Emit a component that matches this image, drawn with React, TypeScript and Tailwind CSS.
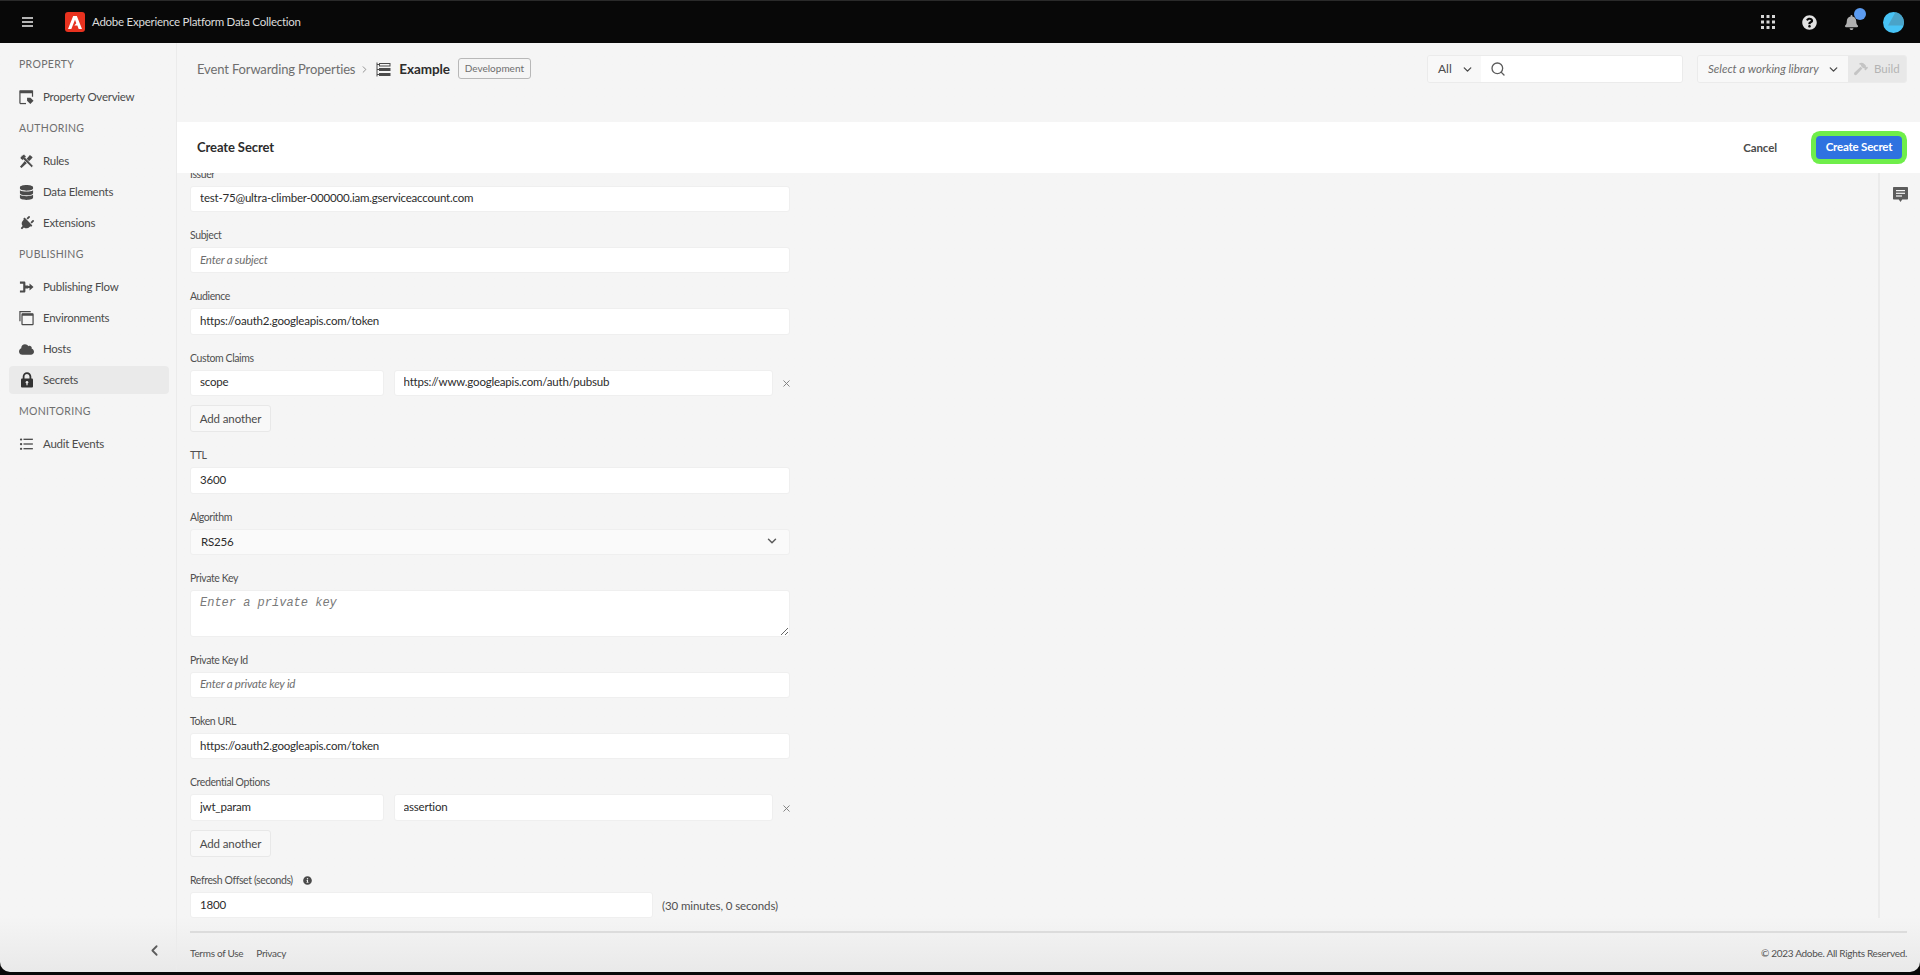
import { ChevronDown, ChevronLeft, ChevronRight, Search, X } from "lucide-react"
import { FaBell, FaCloud, FaDatabase, FaHammer, FaInfoCircle, FaPlug, FaQuestionCircle } from "react-icons/fa"
import type { ReactNode } from "react"

const FONT = "font-['Lato','Noto_Sans',sans-serif]"

function OverviewIcon() {
  return (
    <svg width="16" height="16" viewBox="0 0 16 16" fill="none">
      <path d="M1 15V1.6h13.4v6" stroke="#4b4b4b" strokeWidth="1.3" />
      <path d="M1 15h6.5" stroke="#4b4b4b" strokeWidth="1.3" />
      <rect x="1" y="1" width="13.5" height="3" fill="#4b4b4b" />
      <path d="M8.6 8.8h3.6l3.3 3.3-3.4 3.4-3.5-3.4z" fill="#4b4b4b" />
    </svg>
  )
}

function RulesIcon() {
  return (
    <svg width="16" height="16" viewBox="0 0 16 16" fill="#4b4b4b">
      <path d="M1 14.200 9.800 3.800 11.600 1.500l3 2.600-2 2.200-9.900 9.200z" />
      <path d="M2.800 2.400 5.300.8l2.300 2.300-1 1.100 8.600 9-1.700 1.700-8.900-8.600-1.100 1L1 4.800z" stroke="#f5f5f5" strokeWidth=".7" />
    </svg>
  )
}

function FlowIcon() {
  return (
    <svg width="16" height="16" viewBox="0 0 16 16" fill="#4b4b4b">
      <path d="M1 2.200h4.500c.8 0 1.300.5 1.300 1.300v2.900h3v3.200h-3v3c0 .8-.5 1.300-1.300 1.300H1v-2.200h3.500V4.400H1z" />
      <path d="M9 6.900h2.200V4.200L15.500 8l-4.300 3.800V9.100H9z" />
    </svg>
  )
}

function EnvIcon() {
  return (
    <svg width="16" height="16" viewBox="0 0 16 16" fill="none" stroke="#4b4b4b">
      <path d="M1 11.500V1.200h11.500" strokeWidth="1.3" />
      <rect x="3.200" y="3.600" width="11.800" height="11.400" rx=".6" strokeWidth="1.3" />
      <rect x="3.200" y="3.400" width="11.800" height="2.200" fill="#4b4b4b" stroke="none" />
    </svg>
  )
}

function LockIcon() {
  return (
    <svg width="14" height="16" viewBox="0 0 14 16" fill="#333">
      <path d="M3.600 7V4.500a3.400 3.400 0 0 1 6.800 0V7" fill="none" stroke="#333" strokeWidth="1.800" />
      <rect x="1" y="6.500" width="12" height="9" rx="1" />
      <circle cx="7" cy="10.300" r="1.300" fill="#eaeaea" />
      <rect x="6.400" y="10.500" width="1.200" height="2.800" fill="#eaeaea" />
    </svg>
  )
}

function ListIcon() {
  return (
    <svg width="16" height="16" viewBox="0 0 16 16" fill="#4b4b4b">
      <rect x="1" y="2" width="2.400" height="2.200" rx="1" />
      <rect x="1" y="7" width="2.400" height="2.200" rx="1" />
      <rect x="1" y="12" width="2.400" height="2.200" rx="1" />
      <rect x="4.800" y="2.300" width="10" height="1.400" />
      <rect x="4.800" y="7.300" width="10" height="1.400" />
      <rect x="4.800" y="12.300" width="10" height="1.400" />
    </svg>
  )
}

function ServerIcon() {
  return (
    <svg width="15" height="15" viewBox="0 0 15 15" fill="#4b4b4b">
      <path d="M1 .5v14" stroke="#4b4b4b" strokeWidth="1" />
      <rect x="3.500" y="1.500" width="10.500" height="2.500" fill="none" stroke="#4b4b4b" />
      <rect x="3" y="6" width="11.500" height="3" />
      <rect x="3" y="11" width="11.500" height="3" />
      <rect x="1" y="2" width="2" height="1" />
      <rect x="1" y="7" width="2" height="1" />
      <rect x="1" y="12" width="2" height="1" />
    </svg>
  )
}

function AppsIcon() {
  return (
    <svg width="14" height="14" viewBox="0 0 14 14" fill="#d6d6d6">
      {[0, 5.500, 11].map((y) =>
        [0, 5.500, 11].map((x) => <rect key={`${x}-${y}`} x={x} y={y} width="3" height="3" />)
      )}
    </svg>
  )
}

function AdobeLogo() {
  return (
    <div className="flex h-5 w-5 items-center justify-center rounded-[3px] bg-[#e8321f]">
      <svg width="14" height="13" viewBox="0 0 13 12" fill="#fff">
        <path d="M4.800 0H8.200L13 12H9.900L8.700 8.700H5.900L7.700 6.700 6.500 3.400 3.100 12H0z" />
      </svg>
    </div>
  )
}

function CommentIcon() {
  return (
    <svg width="15" height="16" viewBox="0 0 15 16" fill="#5c5c5c">
      <path d="M1 0h13c.6 0 1 .4 1 1v10.500c0 .6-.4 1-1 1H9.200L7.500 15l-1.700-2.500H1c-.6 0-1-.4-1-1V1c0-.6.4-1 1-1z" />
      <rect x="3" y="3" width="9" height="1.200" fill="#f5f5f5" />
      <rect x="3" y="5.700" width="9" height="1.200" fill="#f5f5f5" />
      <rect x="3" y="8.400" width="6" height="1.200" fill="#f5f5f5" />
    </svg>
  )
}

function Avatar() {
  return (
    <svg width="21" height="21" viewBox="0 0 21 21">
      <circle cx="10.500" cy="10.500" r="10.500" fill="#47c3f5" />
      <path d="M12.500 .2 A10.500 10.500 0 0 1 21 10.500 L20.500 13.500 H5z" fill="#4aa3c8" />
    </svg>
  )
}

function SectionLabel({ children }: { children: ReactNode }) {
  return (
    <div className="mb-[2px] flex h-[31px] items-center pl-[19px] pt-[2px] text-[10.500px] tracking-[0.03em] text-[#6e6e6e]">
      {children}
    </div>
  )
}

function NavItem({ icon, label, active }: { icon: ReactNode; label: string; active?: boolean }) {
  return (
    <div
      className={`my-[1.500px] ml-[9px] mr-[7px] flex h-[28px] items-center gap-[9px] rounded-[4px] pl-[10px] text-[11.500px] tracking-[-0.25px] text-[#4b4b4b] ${active ? "bg-[#eaeaea]" : ""}`}
    >
      <span className="flex w-[15px] shrink-0 items-center justify-center text-[#4b4b4b]">{icon}</span>
      {label}
    </div>
  )
}

function Sidebar() {
  return (
    <aside className="flex w-[177px] shrink-0 flex-col border-r border-[#ebebeb] pt-[5.500px]">
      <SectionLabel>PROPERTY</SectionLabel>
      <NavItem icon={<OverviewIcon />} label="Property Overview" />
      <SectionLabel>AUTHORING</SectionLabel>
      <NavItem icon={<RulesIcon />} label="Rules" />
      <NavItem icon={<FaDatabase size={15} />} label="Data Elements" />
      <NavItem icon={<FaPlug size={15} className="rotate-45" />} label="Extensions" />
      <SectionLabel>PUBLISHING</SectionLabel>
      <NavItem icon={<FlowIcon />} label="Publishing Flow" />
      <NavItem icon={<EnvIcon />} label="Environments" />
      <NavItem icon={<FaCloud size={15} />} label="Hosts" />
      <NavItem icon={<LockIcon />} label="Secrets" active />
      <SectionLabel>MONITORING</SectionLabel>
      <NavItem icon={<ListIcon />} label="Audit Events" />
      <div className="mt-auto flex h-[30px] justify-end pr-[13px]">
        <ChevronLeft size={17} strokeWidth={2.5} className="text-[#5c5c5c]" />
      </div>
    </aside>
  )
}

function TextInput({ value, placeholder, className = "" }: { value?: string; placeholder?: string; className?: string }) {
  return (
    <input
      readOnly
      value={value ?? ""}
      placeholder={placeholder}
      className={`block h-[26.250px] shrink-0 rounded-[3px] border border-[#efefef] bg-white pb-[2px] pl-[9px] text-[11.500px] tracking-[-0.2px] text-[#2c2c2c] outline-none placeholder:text-[#6e6e6e] placeholder:italic ${FONT} ${className}`}
    />
  )
}

function Field({ label, children }: { label: ReactNode; children: ReactNode }) {
  return (
    <div className="mb-[16px]">
      <div className="flex h-[19px] items-start text-[10.500px] leading-[14px] tracking-[-0.4px] text-[#505050]">{label}</div>
      {children}
    </div>
  )
}

function AddAnother() {
  return (
    <button className="mt-[9px] flex h-[27.500px] w-[81px] items-center justify-center rounded-[3px] border border-[#e8e8e8] bg-[#f8f8f8] text-[11.500px] tracking-[-0.1px] text-[#4b4b4b]">
      Add another
    </button>
  )
}

function PairRow({ name, value }: { name: string; value: string }) {
  return (
    <div className="flex items-center">
      <TextInput value={name} className="w-[194px]" />
      <TextInput value={value} className="ml-[9.500px] w-[379px]" />
      <X size={11} strokeWidth={2} className="ml-[8.500px] mt-[2px] shrink-0 text-[#7a7a7a]" />
    </div>
  )
}

function SecretForm() {
  return (
    <div className="-mt-[6.250px] flex w-[600px] shrink-0 flex-col">
      <Field label="Issuer">
        <TextInput value="test-75@ultra-climber-000000.iam.gserviceaccount.com" className="w-full" />
      </Field>
      <Field label="Subject">
        <TextInput placeholder="Enter a subject" className="w-full" />
      </Field>
      <Field label="Audience">
        <TextInput value="https://oauth2.googleapis.com/token" className="w-full" />
      </Field>
      <Field label="Custom Claims">
        <PairRow name="scope" value="https://www.googleapis.com/auth/pubsub" />
        <AddAnother />
      </Field>
      <Field label="TTL">
        <TextInput value="3600" className="w-full" />
      </Field>
      <Field label="Algorithm">
        <div className="flex h-[26.250px] items-center justify-between rounded-[3px] border border-[#efefef] bg-[#fafafa] pb-[1px] pl-[10px] pr-[10px] text-[11.500px] tracking-[-0.2px] text-[#2c2c2c]">
          RS256
          <ChevronDown size={14} strokeWidth={2.500} className="text-[#5c5c5c]" />
        </div>
      </Field>
      <Field label="Private Key">
        <textarea
          readOnly
          placeholder="Enter a private key"
          className="block h-[47px] w-full resize-y rounded-[3px] border border-[#efefef] bg-white px-[9px] py-[3px] font-['Liberation_Mono',monospace] text-[12px] italic outline-none placeholder:text-[#7a7a7a]"
        />
      </Field>
      <Field label="Private Key Id">
        <TextInput placeholder="Enter a private key id" className="w-full" />
      </Field>
      <Field label="Token URL">
        <TextInput value="https://oauth2.googleapis.com/token" className="w-full" />
      </Field>
      <Field label="Credential Options">
        <PairRow name="jwt_param" value="assertion" />
        <AddAnother />
      </Field>
      <Field
        label={
          <span className="flex items-center gap-[10px]">
            Refresh Offset (seconds)
            <FaInfoCircle size={9} className="text-[#4b4b4b]" />
          </span>
        }
      >
        <div className="flex items-center">
          <TextInput value="1800" className="w-[463px]" />
          <span className="ml-[9px] text-[11.500px] tracking-[-0.1px] text-[#505050]">(30 minutes, 0 seconds)</span>
        </div>
      </Field>
    </div>
  )
}

export default function App() {
  return (
    <div className={`flex h-screen w-full flex-col overflow-hidden bg-[#080808] ${FONT}`}>
      <header className="flex h-[43px] shrink-0 items-center border-t border-[#2a2a2a] text-white">
        <div className="ml-[22px] flex w-[11px] flex-col gap-[2.500px]">
          <span className="h-[1.500px] bg-[#b4b4b4]" />
          <span className="h-[1.500px] bg-[#b4b4b4]" />
          <span className="h-[1.500px] bg-[#b4b4b4]" />
        </div>
        <div className="ml-[32px]">
          <AdobeLogo />
        </div>
        <span className="ml-[7px] text-[11.500px] tracking-[-0.25px] text-[#dcdcdc]">Adobe Experience Platform Data Collection</span>
        <div className="ml-auto flex items-center">
          <AppsIcon />
          <FaQuestionCircle size={15} className="ml-[27.500px] text-[#e2e2e2]" />
          <span className="relative ml-[26.500px]">
            <FaBell size={15} className="text-[#b0b0b0]" />
            <span className="absolute -right-[7px] -top-[7px] h-3 w-3 rounded-full bg-[#5b9bf0]" />
          </span>
          <span className="ml-[24px] mr-[16.500px]">
            <Avatar />
          </span>
        </div>
      </header>

      <div className="mb-[3px] flex min-h-0 flex-1 rounded-b-[10px] bg-gradient-to-b from-[#f5f5f5] from-[94%] to-[#e9e9e9]">
        <Sidebar />
        <main className="flex min-w-0 flex-1 flex-col">
          <div className="flex h-[79px] shrink-0 items-start pl-[20px] pr-[13px] pt-[12px]">
            <div className="flex h-[28px] items-center pt-[1px] text-[13px] tracking-[-0.14px] text-[#6e6e6e]">
              Event Forwarding Properties
              <ChevronRight size={11} strokeWidth={2} className="ml-[4px] text-[#8a8a8a]" />
              <span className="ml-[6px]">
                <ServerIcon />
              </span>
              <span className="ml-[8px] text-[13.500px] font-bold tracking-[-0.1px] text-[#2c2c2c]">Example</span>
              <span className="-mt-[2px] ml-[8px] flex h-[21px] w-[73px] items-center justify-center rounded-[3px] border border-[#b8b8b8] text-[10px] tracking-normal text-[#6e6e6e]">
                Development
              </span>
            </div>
            <div className="ml-auto flex h-[28px] w-[256px] overflow-hidden rounded-[3px] border border-[#ebebeb]">
              <div className="flex w-[53px] items-center gap-[9px] bg-[#f8f8f8] pl-[10px] text-[12px] text-[#4b4b4b]">
                All
                <ChevronDown size={13} strokeWidth={2.500} />
              </div>
              <div className="flex flex-1 items-center bg-white pl-[9px]">
                <Search size={16} className="text-[#5c5c5c]" />
              </div>
            </div>
            <div className="ml-[14px] flex h-[28px] w-[210px] overflow-hidden rounded-[3px] border border-[#ebebeb]">
              <div className="flex w-[150px] items-center justify-between bg-[#f8f8f8] pl-[10px] pr-[8px] text-[11.500px] italic text-[#6e6e6e]">
                Select a working library
                <ChevronDown size={13} strokeWidth={2.500} className="text-[#4b4b4b]" />
              </div>
              <div className="flex flex-1 items-center gap-[6px] bg-[#e8e8e8] pl-[6px] text-[11.500px] text-[#b4b4b4]">
                <FaHammer size={14} className="text-[#c4c4c4]" />
                Build
              </div>
            </div>
          </div>

          <div className="z-10 flex h-[51px] shrink-0 items-center bg-white pl-[20px] pr-[13px]">
            <span className="pt-[1px] text-[13px] font-bold tracking-[-0.1px] text-[#2c2c2c]">Create Secret</span>
            <span className="ml-auto text-[11.500px] font-bold tracking-[-0.1px] text-[#4b4b4b]">Cancel</span>
            <button className="ml-[39px] flex h-[23px] w-[86px] items-center justify-center rounded-[4px] bg-[#2f72e0] pb-[1px] text-[11.500px] font-bold tracking-[-0.2px] text-white ring-[5px] ring-[#6fee4a]">
              Create Secret
            </button>
            <span className="w-[5px]" />
          </div>

          <div className="flex min-h-0 flex-1 pl-[13px]">
            <SecretForm />
            <div className="ml-auto flex w-[42px] shrink-0 justify-center border-l-2 border-[#ebebeb] pt-[14px]">
              <CommentIcon />
            </div>
          </div>

          <footer className="mx-[13px] mt-[13px] flex h-[41px] shrink-0 items-start border-t-2 border-[#dcdcdc] pt-[13px] text-[10px] tracking-[-0.3px] text-[#505050]">
            <span>Terms of Use</span>
            <span className="ml-[13px]">Privacy</span>
            <span className="ml-auto">© 2023 Adobe. All Rights Reserved.</span>
          </footer>
        </main>
      </div>
    </div>
  )
}
